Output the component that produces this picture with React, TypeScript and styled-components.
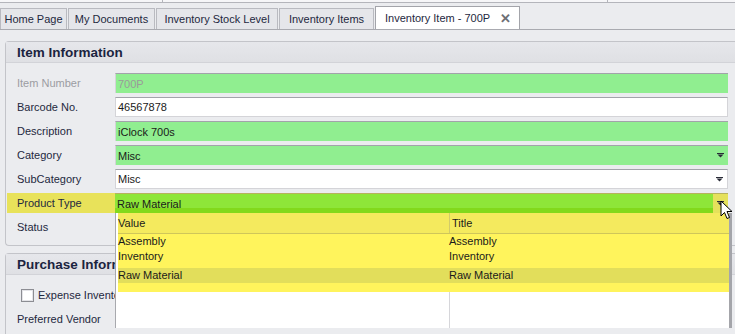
import styled, { createGlobalStyle } from "styled-components";

const GlobalStyle = createGlobalStyle`
    body {
        margin: 0;
        background: #ebecef;
        font-family: "Liberation Sans", Arial, sans-serif;
        font-size: 11px;
        color: #1e2840;
    }
`;

const Screen = styled.div`
    width: 735px;
    height: 334px;
    overflow: hidden;
    position: relative;
    background: #ebecef;
`;

const TopStrip = styled.div`
    display: flex;
    height: 2px;
    background: #f6f6f8;
    border-bottom: 1px solid #b4b5bb;
`;
const TopCell = styled.div<{ $w: number }>`
    width: ${(p) => p.$w}px;
    border-right: 1px solid #b4b5bb;
`;

const TabStrip = styled.div`
    display: flex;
    align-items: flex-end;
    height: 26px;
    border-bottom: 1px solid #a9aab0;
`;
const Tab = styled.div<{ $active?: boolean; $w: number }>`
    box-sizing: border-box;
    width: ${(p) => p.$w}px;
    display: flex;
    align-items: center;
    justify-content: ${(p) => (p.$active ? "space-between" : "center")};
    height: ${(p) => (p.$active ? 23 : 21)}px;
    padding: ${(p) => (p.$active ? "0 8px 0 9px" : "0")};
    margin-right: 1px;
    background: ${(p) => (p.$active ? "#fff" : "#e5e6ea")};
    border: 1px solid ${(p) => (p.$active ? "#a3a4aa" : "#b9bac0")};
    border-bottom: none;
    color: #1e2840;
    white-space: nowrap;
`;
const CloseX = styled.span`
    font-weight: bold;
    font-size: 13px;
    color: #6d6e74;
`;

const Panel = styled.div<{ $top: number }>`
    margin: ${(p) => p.$top}px 0 0 5px;
    border: 1px solid #c3c4c9;
    border-right: none;
    border-radius: 4px 0 0 4px;
`;
const PanelHeader = styled.div`
    height: 20px;
    display: flex;
    align-items: center;
    padding-left: 11px;
    background: linear-gradient(#e6e7eb, #dfe0e4);
    border-bottom: 1px solid #d2d3d8;
    font-weight: bold;
    font-size: 13.5px;
    color: #1b2440;
    white-space: nowrap;
`;
const PanelBody = styled.div`
    display: flex;
    flex-direction: column;
    gap: 4px;
    padding: 10px 7px 8px 1px;
`;
const Row = styled.div`
    display: flex;
    height: 20px;
`;
const Label = styled.div<{ $muted?: boolean; $marked?: boolean }>`
    width: 98px;
    padding-left: 10px;
    display: flex;
    align-items: center;
    color: ${(p) => (p.$muted ? "#9b9ca2" : "#1e2840")};
    background: ${(p) => (p.$marked ? "#e8e25a" : "transparent")};
    white-space: nowrap;
`;
const Field = styled.div<{ $bg?: string; $muted?: boolean }>`
    flex: 1;
    position: relative;
    display: flex;
    align-items: center;
    padding-left: 2px;
    background: ${(p) => p.$bg ?? "#fff"};
    border: 1px solid #d4d4d8;
    border-top-color: #a2a3aa;
    border-right-width: ${(p) => (p.$bg ? 0 : 1)}px;
    border-bottom-width: ${(p) => (p.$bg ? 0 : 1)}px;
    color: ${(p) => (p.$muted ? "#9a9a9a" : "#1a1a1a")};
`;
const HotField = styled(Field)`
    background: linear-gradient(#8ee639 0 75%, #82d91c 75%);
    border: none;
    border-top: 1px solid #b7b25e;
    z-index: 2;
`;
const FieldText = styled.span`
    flex: 1;
    white-space: nowrap;
`;
const ArrowSlot = styled.div<{ $hot?: boolean }>`
    width: 15px;
    align-self: stretch;
    display: flex;
    align-items: center;
    justify-content: center;
    background: ${(p) => (p.$hot ? "#e5e15c" : "transparent")};
`;

const Popup = styled.div`
    position: absolute;
    top: 19px;
    left: 0;
    width: 613px;
    height: 115px;
    background: #fff;
    border-left: 1px solid #a8a9ae;
    box-shadow: 3px 0 0 #a4a5aa;
    display: flex;
    flex-direction: column;
`;
const Highlight = styled.div`
    margin-left: 2px;
    background: #fff45c;
`;
const GridRow = styled.div<{ $head?: boolean; $sel?: boolean }>`
    display: grid;
    grid-template-columns: 331px 1fr;
    height: ${(p) => (p.$head ? 20 : 15)}px;
    line-height: 13px;
    background: ${(p) => (p.$head ? "#f4ea5e" : p.$sel ? "#e2de5b" : "transparent")};
    border-bottom: ${(p) => (p.$head ? "1px solid #cfc65a" : "none")};
    margin-top: ${(p) => (p.$sel ? 4 : 0)}px;
    color: #1a1a1a;
`;
const Cell = styled.div<{ $divider?: boolean }>`
    padding-left: ${(p) => (p.$divider ? 2 : 0)}px;
    align-self: stretch;
    display: flex;
    align-items: center;
    border-left: ${(p) => (p.$divider ? "1px solid #d2cb6a" : "none")};
    white-space: nowrap;
`;
const Filler = styled.div`
    height: 9px;
`;
const Blank = styled.div`
    flex: 1;
    display: grid;
    grid-template-columns: 333px 1fr;
`;
const BlankCol = styled.div<{ $divider?: boolean }>`
    border-left: ${(p) => (p.$divider ? "1px solid #d6d6da" : "none")};
`;

const Cursor = styled.svg`
    position: absolute;
    right: -6px;
    top: 6px;
    z-index: 5;
`;

const CheckRow = styled.div`
    display: flex;
    align-items: center;
    gap: 4px;
    height: 20px;
    padding-left: 14px;
    white-space: nowrap;
`;
const CheckBox = styled.div`
    width: 11px;
    height: 11px;
    border: 1px solid #8c8d93;
    background: #fff;
    box-shadow: inset 0 0 0 1px #e4e4e8;
`;

function Arrow() {
    return (
        <svg width="7" height="5" viewBox="0 0 7 5">
            <rect x="0" y="0" width="7" height="1" fill="#2a2c38" />
            <path d="M0.5 1.5 L6.5 1.5 L3.5 4.5 Z" fill="#2a2c38" />
        </svg>
    );
}

const tabs: [string, number][] = [
    ["Home Page", 67],
    ["My Documents", 87],
    ["Inventory Stock Level", 122],
    ["Inventory Items", 95],
];

export default function App() {
    return (
        <Screen>
            <GlobalStyle />
            <TopStrip>
                <TopCell $w={162} />
                <TopCell $w={444} />
            </TopStrip>
            <TabStrip>
                {tabs.map(([t, w]) => (
                    <Tab key={t} $w={w}>
                        {t}
                    </Tab>
                ))}
                <Tab $active $w={145}>
                    Inventory Item - 700P
                    <CloseX>✕</CloseX>
                </Tab>
            </TabStrip>

            <Panel $top={11}>
                <PanelHeader>Item Information</PanelHeader>
                <PanelBody>
                    <Row>
                        <Label $muted>Item Number</Label>
                        <Field $bg="#90ee90" $muted>
                            <FieldText>700P</FieldText>
                        </Field>
                    </Row>
                    <Row>
                        <Label>Barcode No.</Label>
                        <Field>
                            <FieldText>46567878</FieldText>
                        </Field>
                    </Row>
                    <Row>
                        <Label>Description</Label>
                        <Field $bg="#90ee90">
                            <FieldText>iClock 700s</FieldText>
                        </Field>
                    </Row>
                    <Row>
                        <Label>Category</Label>
                        <Field $bg="#90ee90">
                            <FieldText>Misc</FieldText>
                            <ArrowSlot>
                                <Arrow />
                            </ArrowSlot>
                        </Field>
                    </Row>
                    <Row>
                        <Label>SubCategory</Label>
                        <Field>
                            <FieldText>Misc</FieldText>
                            <ArrowSlot>
                                <Arrow />
                            </ArrowSlot>
                        </Field>
                    </Row>
                    <Row>
                        <Label $marked>Product Type</Label>
                        <HotField>
                            <FieldText>Raw Material</FieldText>
                            <ArrowSlot $hot>
                                <Arrow />
                            </ArrowSlot>
                            <Cursor width="14" height="20" viewBox="0 0 14 20">
                                <path
                                    d="M1 1 L1 16 L4.5 12.5 L7 18.5 L9.5 17.5 L7 11.5 L12 11.5 Z"
                                    fill="#fff"
                                    stroke="#000"
                                    strokeWidth="1"
                                    strokeLinejoin="round"
                                />
                            </Cursor>
                            <Popup>
                                <Highlight>
                                    <GridRow $head>
                                        <Cell>Value</Cell>
                                        <Cell $divider>Title</Cell>
                                    </GridRow>
                                    <GridRow>
                                        <Cell>Assembly</Cell>
                                        <Cell>Assembly</Cell>
                                    </GridRow>
                                    <GridRow>
                                        <Cell>Inventory</Cell>
                                        <Cell>Inventory</Cell>
                                    </GridRow>
                                    <GridRow $sel>
                                        <Cell>Raw Material</Cell>
                                        <Cell>Raw Material</Cell>
                                    </GridRow>
                                    <Filler />
                                </Highlight>
                                <Blank>
                                    <BlankCol />
                                    <BlankCol $divider />
                                </Blank>
                            </Popup>
                        </HotField>
                    </Row>
                    <Row>
                        <Label>Status</Label>
                    </Row>
                </PanelBody>
            </Panel>

            <Panel $top={7}>
                <PanelHeader>Purchase Information</PanelHeader>
                <PanelBody>
                    <CheckRow>
                        <CheckBox />
                        Expense Inventory Item
                    </CheckRow>
                    <Row>
                        <Label>Preferred Vendor</Label>
                    </Row>
                </PanelBody>
            </Panel>
        </Screen>
    );
}
